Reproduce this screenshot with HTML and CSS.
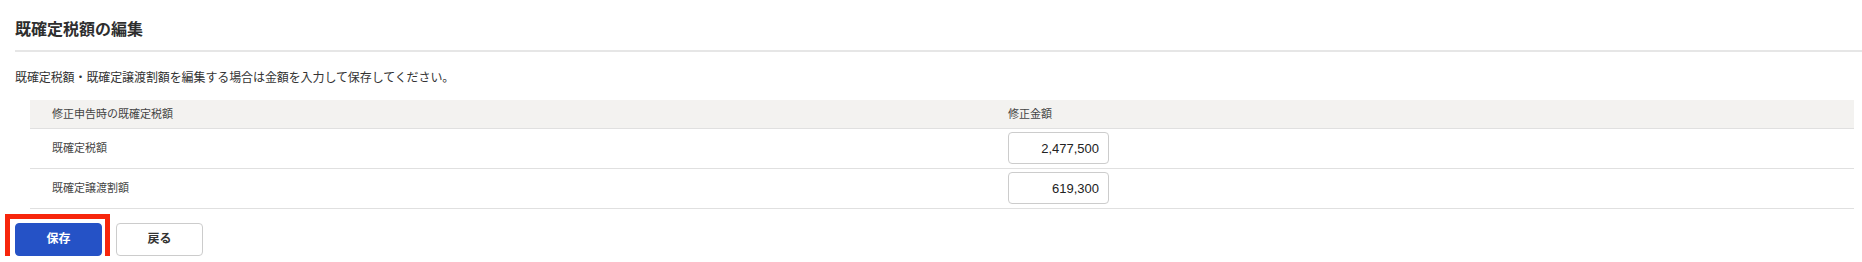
FILE: index.html
```html
<!DOCTYPE html>
<html lang="ja">
<head>
<meta charset="utf-8">
<title>既確定税額の編集</title>
<link rel="stylesheet" href="styles.css">
</head>
<body>
<div class="page">
  <h1 class="title">既確定税額の編集</h1>
  <p class="desc">既確定税額・既確定譲渡割額を編集する場合は金額を入力して保存してください。</p>
  <table class="tax-table">
    <thead>
      <tr>
        <th class="col-label">修正申告時の既確定税額</th>
        <th class="col-amount">修正金額</th>
      </tr>
    </thead>
    <tbody>
      <tr>
        <td class="col-label">既確定税額</td>
        <td class="col-amount"><input class="amount-input" type="text" value="2,477,500"></td>
      </tr>
      <tr>
        <td class="col-label">既確定譲渡割額</td>
        <td class="col-amount"><input class="amount-input" type="text" value="619,300"></td>
      </tr>
    </tbody>
  </table>
  <div class="actions">
    <button class="btn btn-primary" type="button">保存</button>
    <button class="btn btn-secondary" type="button">戻る</button>
    <div class="highlight"></div>
  </div>
</div>
</body>
</html>
```
FILE: styles.css
```css
* { box-sizing: border-box; }

body {
  margin: 0;
  background: #ffffff;
  color: #333333;
  font-family: "Liberation Sans", "Noto Sans CJK JP", sans-serif;
}

.page {
  padding-left: 15px;
}

.title {
  margin: 0;
  padding: 20px 0 10px;
  line-height: 20px;
  font-size: 16px;
  font-weight: bold;
  color: #2e2e2e;
  border-bottom: 2px solid #e6e6e6;
}

.desc {
  margin: 18px 0 14px;
  font-size: 12px;
  letter-spacing: -0.1px;
  line-height: 16px;
  color: #333333;
}

.tax-table {
  margin-left: 15px;
  width: calc(100% - 23px);
  border-collapse: collapse;
  font-size: 11px;
  color: #444444;
}

.tax-table th {
  background: #f3f2f0;
  font-weight: normal;
  text-align: left;
  height: 28px;
  padding: 0 0 0 22px;
  line-height: 16px;
  border-bottom: 1px solid #e0e0e0;
}

.tax-table td {
  height: 40px;
  padding: 0 0 0 22px;
  line-height: 16px;
  border-bottom: 1px solid #e0e0e0;
}

.col-label { width: 956px; }

.amount-input {
  display: block;
  width: 101px;
  height: 32px;
  border: 1px solid #cccccc;
  border-radius: 4px;
  text-align: right;
  padding: 0 9px 0 0;
  font-family: "Liberation Sans", "Noto Sans CJK JP", sans-serif;
  font-size: 13px;
  color: #222222;
  background: #ffffff;
}

.actions {
  position: relative;
  display: flex;
  gap: 14px;
  margin-top: 14px;
}

.btn {
  width: 87px;
  height: 33px;
  border-radius: 4px;
  font-family: "Liberation Sans", "Noto Sans CJK JP", sans-serif;
  font-size: 12px;
  font-weight: bold;
  padding: 0;
  line-height: 16px;
}

.btn-primary {
  background: #2552c6;
  border: 1px solid #2552c6;
  color: #ffffff;
}

.btn-secondary {
  background: #ffffff;
  border: 1px solid #cccccc;
  color: #333333;
}

.highlight {
  position: absolute;
  left: -10px;
  top: -9px;
  width: 105px;
  height: 48px;
  border: 5px solid #f7260c;
  pointer-events: none;
}
```
